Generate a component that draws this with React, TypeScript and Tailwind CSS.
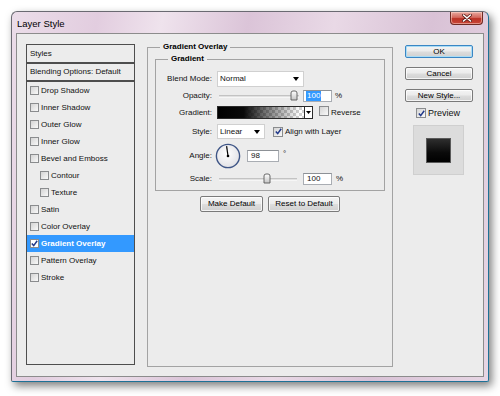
import React from "react";

function Check({ checked = false }: { checked?: boolean }) {
  return (
    <span className="inline-flex w-[9px] h-[9px] shrink-0 items-center justify-center border border-[#8a8c8e] bg-[linear-gradient(135deg,#d4d4d4,#f9f9f9)]">
      {checked && (
        <svg width="7" height="7" viewBox="0 0 7 7">
          <path d="M0.8 3.4 L2.7 5.6 L6.2 0.8" fill="none" stroke="#21398a" strokeWidth="1.5" />
        </svg>
      )}
    </span>
  );
}

function Slider({ width, pos }: { width: number; pos: number }) {
  return (
    <svg width={width} height="12" viewBox={`0 0 ${width} 12`}>
      <line x1="0" y1="6" x2={width} y2="6" stroke="#9a9a9a" strokeWidth="1" />
      <line x1="0" y1="7" x2={width} y2="7" stroke="#ffffff" strokeWidth="1" />
      <defs>
        <linearGradient id={`tg${pos}`} x1="0" y1="0" x2="0" y2="1">
          <stop offset="0" stopColor="#ffffff" />
          <stop offset="1" stopColor="#c4c4c4" />
        </linearGradient>
      </defs>
      <path
        d={`M${pos - 3} 3 Q${pos - 3} 1 ${pos - 1} 1 L${pos + 1} 1 Q${pos + 3} 1 ${pos + 3} 3 L${pos + 3} 10 L${pos - 3} 10 Z`}
        fill={`url(#tg${pos})`}
        stroke="#5a5a5a"
        strokeWidth="0.9"
      />
    </svg>
  );
}

function Input({ value, selected = false, w }: { value: string; selected?: boolean; w: string }) {
  return (
    <div className={`${w} h-[12px] flex items-center bg-white border border-[#a9adb3] border-t-[#8d9196] pl-[2px]`}>
      {selected ? (
        <span className="bg-[#3399ff] text-white leading-[10px] px-[1px]">{value}</span>
      ) : (
        <span className="leading-[10px] px-[1px]">{value}</span>
      )}
    </div>
  );
}

function Arrow() {
  return (
    <svg width="6" height="4" viewBox="0 0 6 4">
      <path d="M0 0 L6 0 L3 4 Z" fill="#000" />
    </svg>
  );
}

function Btn({ children, cls, def = false }: { children: React.ReactNode; cls: string; def?: boolean }) {
  return (
    <div
      className={`${cls} flex items-center justify-center rounded-[2px] border ${
        def ? "border-[#3a86c4] shadow-[inset_0_0_0_1px_#a9dcf5]" : "border-[#7a7a7a] shadow-[inset_0_0_0_1px_rgba(255,255,255,0.75)]"
      } bg-[linear-gradient(#f4f4f4,#ebebeb_48%,#dddddd_52%,#d0d0d0)] text-[8px] leading-[10px] text-black`}
    >
      {children}
    </div>
  );
}

const items: { label: string; sub?: boolean; selected?: boolean }[] = [
  { label: "Drop Shadow" },
  { label: "Inner Shadow" },
  { label: "Outer Glow" },
  { label: "Inner Glow" },
  { label: "Bevel and Emboss" },
  { label: "Contour", sub: true },
  { label: "Texture", sub: true },
  { label: "Satin" },
  { label: "Color Overlay" },
  { label: "Gradient Overlay", selected: true },
  { label: "Pattern Overlay" },
  { label: "Stroke" },
];

export default function App() {
  const a = (98 * Math.PI) / 180;
  const ex = 13 + 10 * Math.cos(a);
  const ey = 13 - 10 * Math.sin(a);
  return (
    <div className="w-[500px] h-[396px] bg-white overflow-hidden font-['Liberation_Sans',Arial,sans-serif] text-[8px] leading-[10px] text-[#111]">
      <div className="ml-[11px] mt-[11px] w-[478px] h-[371px] flex flex-col rounded-t-[6px] rounded-b-[2px] border border-[#6a6a72] border-r-[#1e7196] border-b-[#1e7196] bg-[linear-gradient(100deg,#ebdde9_0%,#e2cddf_16%,#efe3ed_28%,#dbc4d8_44%,#e9d9e6_60%,#d9c2d6_78%,#e7d6e4_100%)] shadow-[3px_4px_9px_rgba(0,0,0,0.5)]">
        {/* Title bar */}
        <div className="h-[21px] flex items-start">
          <span className="ml-[5px] mt-[6px] text-[9.5px] leading-[11px] text-black">Layer Style</span>
          <div className="ml-auto mr-[5px] w-[33px] h-[13px] flex items-center justify-center rounded-b-[4px] border border-t-0 border-[#6f2a24] bg-[linear-gradient(#e9a99f,#d4685d_45%,#bb3225_55%,#c9473a)] shadow-[inset_0_0_0_1px_rgba(255,220,210,0.5)]">
            <svg width="10" height="8" viewBox="0 0 10 8">
              <path d="M1.5 1 L8.5 7 M8.5 1 L1.5 7" stroke="#5a1b16" strokeWidth="3" strokeLinecap="round" />
              <path d="M1.5 1 L8.5 7 M8.5 1 L1.5 7" stroke="#ffffff" strokeWidth="1.6" strokeLinecap="round" />
            </svg>
          </div>
        </div>

        {/* Client */}
        <div className="flex-1 mx-[4px] mb-[4px] border border-[#8c8c8c] bg-[#ececec] flex items-start pl-[9px]">
          {/* Left styles list */}
          <div className="mt-[10px] w-[109px] h-[321px] border border-[#4e4e4e] flex flex-col">
            <div className="h-[19px] border-b-[2px] border-[#4e4e4e] flex items-center pl-[3px]">Styles</div>
            <div className="h-[18px] border-b-[2px] border-[#4e4e4e] flex items-center pl-[3px]">Blending Options: Default</div>
            {items.map((it) => (
              <div
                key={it.label}
                className={`h-[17px] flex items-center gap-[2px] ${it.sub ? "pl-[13px]" : "pl-[3px]"} ${
                  it.selected ? "bg-[#3399ff] text-white font-bold" : ""
                }`}
              >
                {it.selected ? (
                  <span className="inline-flex w-[9px] h-[9px] shrink-0 items-center justify-center border border-[#8a8c8e] bg-white">
                    <svg width="7" height="7" viewBox="0 0 7 7">
                      <path d="M0.8 3.4 L2.7 5.6 L6.2 0.8" fill="none" stroke="#21398a" strokeWidth="1.5" />
                    </svg>
                  </span>
                ) : (
                  <Check />
                )}
                <span>{it.label}</span>
              </div>
            ))}
          </div>

          {/* Gradient Overlay group */}
          <fieldset className="ml-[12px] mt-[8px] w-[246px] h-[325px] border border-[#a3a3a3] flex flex-col">
            <legend className="ml-[12px] px-[3px] font-bold leading-[10px] text-black">Gradient Overlay</legend>
            <fieldset className="ml-[7px] mt-[2px] w-[230px] border border-[#a3a3a3] pb-[5px]">
              <legend className="ml-[12px] px-[3px] font-bold leading-[10px] text-black">Gradient</legend>
              <div className="flex flex-col">
                <div className="mt-[7px] h-[16px] flex items-center">
                  <span className="w-[56px] text-right">Blend Mode:</span>
                  <div className="ml-[5px] w-[87px] h-[16px] bg-white border border-[#d0d0d0] flex items-center justify-between pl-[2px] pr-[4px]">
                    <span>Normal</span>
                    <Arrow />
                  </div>
                </div>
                <div className="mt-[3px] h-[12px] flex items-center">
                  <span className="w-[56px] text-right">Opacity:</span>
                  <div className="ml-[7px] flex items-center">
                    <Slider width={80} pos={75} />
                  </div>
                  <div className="ml-[4px]">
                    <Input value="100" selected w="w-[29px]" />
                  </div>
                  <span className="ml-[3px]">%</span>
                </div>
                <div className="mt-[4px] h-[13px] flex items-center">
                  <span className="w-[56px] text-right">Gradient:</span>
                  <div className="ml-[5px] w-[96px] h-[13px] border border-[#2a2a2a] flex">
                    <div className="flex-1 h-full bg-[conic-gradient(#d0d0d0_25%,#ffffff_0_50%,#d0d0d0_0_75%,#ffffff_0)] bg-[length:6px_6px]">
                      <div className="w-full h-full bg-[linear-gradient(to_right,#000_0%,#0a0a0a_30%,rgba(0,0,0,0.55)_55%,rgba(0,0,0,0)_95%)]" />
                    </div>
                    <div className="w-[8px] h-full border-l border-[#2a2a2a] bg-white flex items-center justify-center">
                      <svg width="5" height="3" viewBox="0 0 5 3">
                        <path d="M0 0 L5 0 L2.5 3 Z" fill="#000" />
                      </svg>
                    </div>
                  </div>
                  <span className="ml-[6px]">
                    <span className="inline-flex w-[10px] h-[10px] border border-[#8a8c8e] bg-[linear-gradient(135deg,#d4d4d4,#f9f9f9)]" />
                  </span>
                  <span className="ml-[2px]">Reverse</span>
                </div>
                <div className="mt-[5px] h-[15px] flex items-center">
                  <span className="w-[56px] text-right">Style:</span>
                  <div className="ml-[5px] w-[48px] h-[15px] bg-white border border-[#d0d0d0] flex items-center justify-between pl-[2px] pr-[4px]">
                    <span>Linear</span>
                    <Arrow />
                  </div>
                  <span className="ml-[8px] inline-flex">
                    <span className="inline-flex w-[10px] h-[10px] items-center justify-center border border-[#8a8c8e] bg-[linear-gradient(135deg,#d4d4d4,#f9f9f9)]">
                      <svg width="7" height="7" viewBox="0 0 7 7">
                        <path d="M0.8 3.4 L2.7 5.6 L6.2 0.8" fill="none" stroke="#21398a" strokeWidth="1.5" />
                      </svg>
                    </span>
                  </span>
                  <span className="ml-[2px]">Align with Layer</span>
                </div>
                <div className="mt-[5px] h-[24px] flex items-center">
                  <span className="w-[56px] text-right">Angle:</span>
                  <svg className="ml-[3px]" width="26" height="26" viewBox="0 0 26 26">
                    <defs>
                      <radialGradient id="dial" cx="0.45" cy="0.4" r="0.6">
                        <stop offset="0" stopColor="#ffffff" />
                        <stop offset="1" stopColor="#e2e2e6" />
                      </radialGradient>
                    </defs>
                    <circle cx="13" cy="13" r="11.6" fill="url(#dial)" stroke="#3e5586" strokeWidth="1.4" />
                    <line x1="13" y1="13" x2={ex} y2={ey} stroke="#000" strokeWidth="1.2" />
                    <circle cx="13" cy="13" r="1.3" fill="#000" />
                  </svg>
                  <div className="ml-[6px]">
                    <Input value="98" w="w-[32px]" />
                  </div>
                  <span className="ml-[4px] -mt-[5px]">°</span>
                </div>
                <div className="mt-[5px] h-[12px] flex items-center">
                  <span className="w-[56px] text-right">Scale:</span>
                  <div className="ml-[7px] flex items-center">
                    <Slider width={78} pos={48} />
                  </div>
                  <div className="ml-[6px]">
                    <Input value="100" w="w-[29px]" />
                  </div>
                  <span className="ml-[4px]">%</span>
                </div>
              </div>
            </fieldset>
            <div className="mt-[5px] flex justify-center gap-[5px]">
              <Btn cls="w-[63px] h-[16px]">Make Default</Btn>
              <Btn cls="w-[72px] h-[16px]">Reset to Default</Btn>
            </div>
          </fieldset>

          {/* Right column */}
          <div className="ml-[12px] mt-[11px] w-[68px] flex flex-col">
            <Btn cls="w-[68px] h-[13px]" def>
              OK
            </Btn>
            <div className="mt-[9px]">
              <Btn cls="w-[68px] h-[13px]">Cancel</Btn>
            </div>
            <div className="mt-[9px]">
              <Btn cls="w-[68px] h-[13px]">New Style...</Btn>
            </div>
            <div className="mt-[6px] ml-[11px] h-[10px] flex items-center">
              <span className="inline-flex w-[10px] h-[10px] items-center justify-center border border-[#8a8c8e] bg-[linear-gradient(135deg,#d4d4d4,#f9f9f9)]">
                <svg width="7" height="7" viewBox="0 0 7 7">
                  <path d="M0.8 3.4 L2.7 5.6 L6.2 0.8" fill="none" stroke="#21398a" strokeWidth="1.5" />
                </svg>
              </span>
              <span className="ml-[2px] text-[9px]">Preview</span>
            </div>
            <div className="mt-[7px] ml-[8px] w-[51px] h-[50px] bg-[#dcdcdc] border border-[#cfcfcf] flex items-center justify-center">
              <div className="w-[25px] h-[25px] border border-[#5a5a5a] bg-[linear-gradient(180deg,#2e2e2e,#0a0a0a_60%,#000)]" />
            </div>
          </div>
        </div>
      </div>
    </div>
  );
}
